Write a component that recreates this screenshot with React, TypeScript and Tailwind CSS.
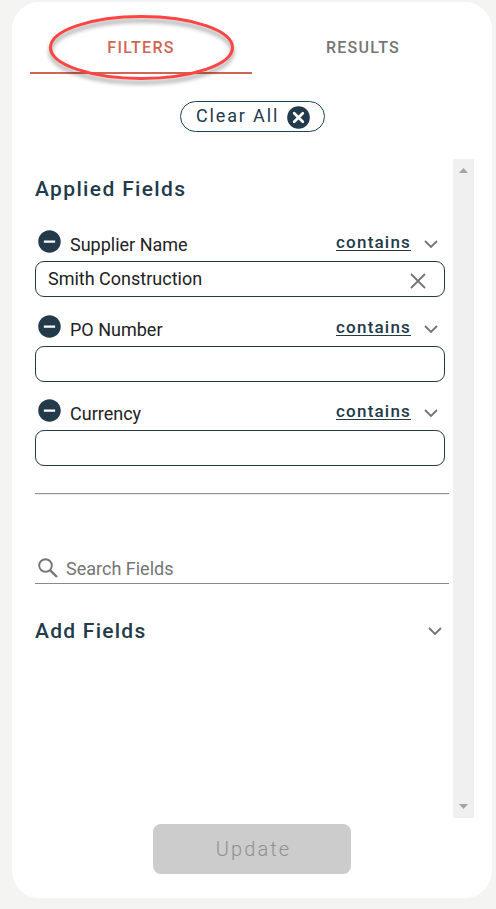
// Filter panel
import { useState } from 'react';
import { MdRemoveCircle } from 'react-icons/md';

interface AppliedField {
  id: string;
  label: string;
  height: string;
}

const appliedFields: AppliedField[] = [
  { id: 'supplier', label: 'Supplier Name', height: 'h-[85px]' },
  { id: 'po', label: 'PO Number', height: 'h-[84px]' },
  { id: 'currency', label: 'Currency', height: 'h-[84px]' },
];

function Chevron() {
  return (
    <svg className="h-2.5 w-3.5 shrink-0" viewBox="0 0 14 10" fill="none" stroke="#757575" strokeWidth="1.9">
      <path d="M1 2 L7 8 L13 2" />
    </svg>
  );
}

export default function App() {
  const [values, setValues] = useState<Record<string, string>>({
    supplier: 'Smith Construction',
    po: '',
    currency: '',
  });

  const setValue = (id: string, value: string) => setValues({ ...values, [id]: value });

  return (
    <div className="h-[909px] w-[496px] overflow-hidden bg-[#f4f4f2] pt-0.5 pl-3 font-['Roboto',sans-serif]">
      <div className="flex h-[896px] w-[480px] flex-col rounded-[27px] bg-white px-[18px]">
        {/* Tabs */}
        <div className="relative flex h-[72px] shrink-0 text-base font-medium">
          <button className="flex-1 border-b-2 border-[#d16553] pt-[21px] tracking-[1.25px] text-[#d16553]">FILTERS</button>
          <button className="flex-1 border-b-2 border-transparent pt-[21px] tracking-[1.25px] text-[#757575]">RESULTS</button>
          <svg className="pointer-events-none absolute top-2 left-3 h-20 w-52" viewBox="0 0 208 80" fill="none">
            <ellipse
              cx="99.5"
              cy="37.5"
              rx="91"
              ry="31"
              stroke="#ff4444"
              strokeWidth="3"
              className="drop-shadow-[0_4px_2px_rgba(0,0,0,0.4)]"
            />
          </svg>
        </div>

        <button className="mt-[27px] ml-[150px] flex h-[31px] w-[145px] shrink-0 items-center justify-between rounded-full border border-[#174457] pr-[14px] pl-[15px] text-lg leading-none tracking-[1.85px] text-[#223a4a]">
          <span className="pb-0.5">Clear All</span>
          <svg className="mt-px h-[23px] w-[23px]" viewBox="0 0 23 23">
            <circle cx="11.5" cy="11.5" r="11.3" fill="#223a4a" />
            <path d="M7.2 7.2 L15.8 15.8 M15.8 7.2 L7.2 15.8" stroke="white" strokeWidth="2.7" strokeLinecap="round" />
          </svg>
        </button>

        {/* Scrollable list */}
        <div className="mt-[27px] flex h-[659px] shrink-0 justify-between pl-[5px]">
          <div className="w-[414px]">
            <h2 className="flex h-[66px] items-center pb-[5px] text-[21px] font-medium tracking-[1.35px] text-[#223a4a]">Applied Fields</h2>
            {appliedFields.map((field) => (
              <div key={field.id} className={`w-[410px] ${field.height}`}>
                <div className="flex h-9 items-center">
                  <MdRemoveCircle className="mb-1 ml-[0.5px] h-[27px] w-[27px] text-[#223a4a]" />
                  <span className="ml-[7.5px] pt-[3px] text-lg leading-none text-[#222]">{field.label}</span>
                  <button className="ml-auto text-[17px] leading-[18px] font-medium tracking-[1.2px] text-[#223a4a]">
                    <span className="block h-4 border-b border-[#223a4a] leading-[15px]">contains</span>
                  </button>
                  <span className="mt-0.5 mr-[7px] ml-[13px]"><Chevron /></span>
                </div>
                <div className="flex h-9 items-center rounded-[9px] border border-[#223a4a] pr-[18px] pl-3">
                  <input
                    className="min-w-0 flex-1 pb-0.5 text-lg leading-none text-[#222] outline-none"
                    value={values[field.id]}
                    onChange={(e) => setValue(field.id, e.target.value)}
                  />
                  {values[field.id] && (
                    <button onClick={() => setValue(field.id, '')}>
                      <svg className="mt-1 h-4 w-4" viewBox="0 0 16 16" stroke="#757575" strokeWidth="1.8">
                        <path d="M1 1 L15 15 M15 1 L1 15" />
                      </svg>
                    </button>
                  )}
                </div>
              </div>
            ))}
            <div className="mt-[15px] h-0.5 border-t border-[#929292] bg-[#ececec]" />
            <div className="mt-[57px] flex h-8 items-center border-b border-[#8a8a8a] text-[#757575]">
              <svg className="ml-[3px] h-5 w-5" viewBox="0 0 20 20" fill="none" stroke="currentColor">
                <circle cx="7.5" cy="7.5" r="6.3" strokeWidth="1.9" />
                <path d="M12.3 12.3 L19 19" strokeWidth="2.4" />
              </svg>
              <input className="ml-2 flex-1 pt-0.5 text-lg leading-none outline-none placeholder:text-[#757575]" placeholder="Search Fields" />
            </div>
            <div className="mt-[31px] flex h-8 items-center justify-between pr-[7px]">
              <h2 className="pt-px text-[21px] font-medium tracking-[1.25px] text-[#223a4a]">Add Fields</h2>
              <Chevron />
            </div>
          </div>
          <div className="flex w-[21px] flex-col items-center justify-between bg-[#f0f0f0] py-[9px]">
            <svg className="h-[5px] w-[9px]" viewBox="0 0 9 5" fill="#a3a3a3"><path d="M0 5 L4.5 0 L9 5 Z" /></svg>
            <svg className="h-[5px] w-[9px]" viewBox="0 0 9 5" fill="#a3a3a3"><path d="M0 0 L4.5 5 L9 0 Z" /></svg>
          </div>
        </div>

        <button className="mt-1.5 ml-[123px] h-[50px] w-[198px] shrink-0 rounded-lg bg-[#cccccc] pl-[3px] text-xl font-light tracking-[2.1px] text-[#909090]" disabled>
          Update
        </button>
      </div>
    </div>
  );
}
